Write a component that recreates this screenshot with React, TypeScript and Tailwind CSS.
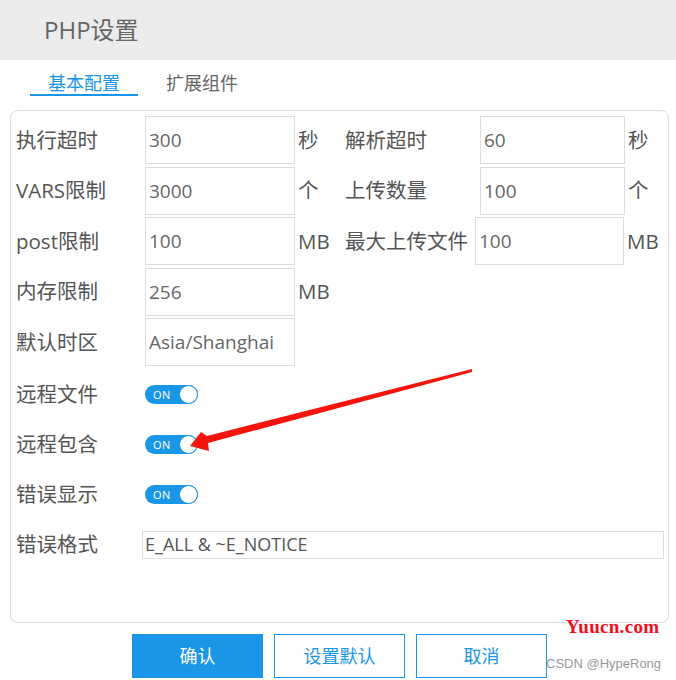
const FONT = "font-['Open_Sans','Noto_Sans_CJK_SC',sans-serif]"

type Field = { label: string; labelW: string; inputW: string; value: string; unit: string }

const ROWS: { left: Field; right?: Field }[] = [
  {
    left: { label: '执行超时', labelW: 'w-[129px]', inputW: 'w-[150px]', value: '300', unit: '秒' },
    right: { label: '解析超时', labelW: 'w-[135px]', inputW: 'w-[145px]', value: '60', unit: '秒' },
  },
  {
    left: { label: 'VARS限制', labelW: 'w-[129px]', inputW: 'w-[150px]', value: '3000', unit: '个' },
    right: { label: '上传数量', labelW: 'w-[135px]', inputW: 'w-[145px]', value: '100', unit: '个' },
  },
  {
    left: { label: 'post限制', labelW: 'w-[129px]', inputW: 'w-[150px]', value: '100', unit: 'MB' },
    right: { label: '最大上传文件', labelW: 'w-[130px]', inputW: 'w-[149px]', value: '100', unit: 'MB' },
  },
  { left: { label: '内存限制', labelW: 'w-[129px]', inputW: 'w-[150px]', value: '256', unit: 'MB' } },
  { left: { label: '默认时区', labelW: 'w-[129px]', inputW: 'w-[150px]', value: 'Asia/Shanghai', unit: '' } },
]

const SWITCHES = ['远程文件', '远程包含', '错误显示']

function Cell({ f }: { f: Field }) {
  return (
    <>
      <div className={`${f.labelW} shrink-0 whitespace-nowrap text-[20.5px] text-[#555]`}>{f.label}</div>
      <div
        className={`${f.inputW} h-[48px] shrink-0 border border-[#ddd] flex items-center pl-[3px] text-[19px] text-[#666]`}
      >
        {f.value}
      </div>
      <div className="w-[50px] shrink-0 pl-[3px] text-[20.5px] text-[#555]">{f.unit}</div>
    </>
  )
}

function Toggle() {
  return (
    <div className="w-[53px] h-[19px] rounded-full bg-[#1a96e6] flex items-center justify-between pl-[8px]">
      <span className="text-[11px] text-white leading-none tracking-[0.5px]">ON</span>
      <span className="w-[19px] h-[19px] rounded-full bg-white border border-[#1a96e6]" />
    </div>
  )
}

export default function App() {
  return (
    <div className={`relative w-[676px] h-[680px] overflow-hidden bg-white ${FONT}`}>
      <div className="h-[60px] bg-[#ececec] flex items-center pl-[44px] text-[24px] text-[#666]">PHP设置</div>

      <div className="h-[50px] flex items-end gap-[10px] pl-[30px] pb-[14px]">
        <div className="w-[108px] text-center text-[18px] text-[#1a96e6] border-b-2 border-[#1a96e6] leading-[22px]">
          基本配置
        </div>
        <div className="w-[108px] text-center text-[18px] text-[#666] leading-[22px] pb-[2px]">扩展组件</div>
      </div>

      <div className="ml-[10px] w-[659px] h-[513px] border border-[#ddd] rounded-[8px] pl-[5px] pt-[4px] flex flex-col">
        {ROWS.map((r) => (
          <div key={r.left.label} className="h-[50.5px] shrink-0 flex items-center">
            <Cell f={r.left} />
            {r.right && <Cell f={r.right} />}
          </div>
        ))}
        <div className="mt-[2px] flex flex-col">
          {SWITCHES.map((s) => (
            <div key={s} className="h-[50px] flex items-center">
              <div className="w-[129px] text-[20.5px] text-[#555]">{s}</div>
              <Toggle />
            </div>
          ))}
          <div className="h-[50px] flex items-center">
            <div className="w-[126px] text-[20.5px] text-[#555]">错误格式</div>
            <div className="w-[522px] h-[28px] border border-[#ddd] flex items-center pl-[2px] text-[18px] text-[#555]">
              E_ALL &amp; ~E_NOTICE
            </div>
          </div>
        </div>
      </div>

      <div className="mt-[11px] pl-[132px] flex gap-[11px]">
        <button className="w-[131px] h-[44px] bg-[#1a96e6] text-white text-[18px]">确认</button>
        <button className="w-[131px] h-[44px] border border-[#1a96e6] text-[#1a96e6] text-[18px]">设置默认</button>
        <button className="w-[131px] h-[44px] border border-[#1a96e6] text-[#1a96e6] text-[18px]">取消</button>
      </div>

      <svg className="absolute left-0 top-0 pointer-events-none" width="676" height="680">
        <polygon
          points="472,369 207,436 201,432 190,446 209,451 208,443 472,372"
          fill="#f5150c"
        />
      </svg>

      <div className="absolute left-[566px] top-[613px] font-['Liberation_Serif',serif] font-bold text-[19px] text-[#f01020] tracking-[0.3px]">
        Yuucn.com
      </div>
      <div className="absolute left-[546px] top-[654px] font-['Liberation_Sans',sans-serif] text-[13px] text-[#999]">
        CSDN @HypeRong
      </div>
    </div>
  )
}
